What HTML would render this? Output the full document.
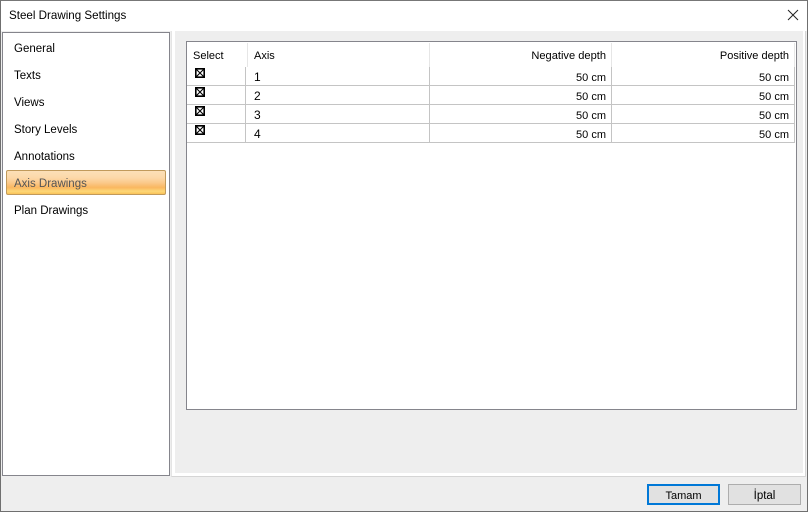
<!DOCTYPE html>
<html><head><meta charset="utf-8">
<style>
html,body{margin:0;padding:0}
body{width:808px;height:512px;overflow:hidden;position:relative;background:#eeeeee;font-family:"Liberation Sans",sans-serif;font-size:11px;color:#000}
div{position:absolute;box-sizing:border-box}
.t{white-space:nowrap;line-height:16px;height:16px}
.l{font-size:11.5px}
.r{text-align:right}
.hl{height:1px;background:#c4c4c4;left:187px;width:608px}
.vl{width:1px;background:#c4c4c4;top:67px;height:76px}
.hs{width:1px;background:#e6e6e6;top:43px;height:24px}
svg{position:absolute}
</style></head><body>
<div style="left:0;top:31px;width:808px;height:481px;background:#eeeeee"></div>
<div style="left:0;top:0;width:808px;height:31px;background:#fff"></div>
<div style="left:171px;top:31px;width:635px;height:446px;background:#fff;border-bottom:1px solid #d5d5d5;border-right:1px solid #d5d5d5;border-left:1px solid #e4e4e4"></div>
<div style="left:175px;top:31px;width:628px;height:442px;background:#eeeeee"></div>
<div style="left:0;top:0;width:808px;height:512px;border:1px solid #6f6f6f;border-top-color:#777"></div>
<div class="t" style="left:9px;top:8px;font-size:11.6px">Steel Drawing Settings</div>
<svg style="left:787px;top:9px" width="12" height="12" viewBox="0 0 12 12"><path d="M1 1L11 11M11 1L1 11" stroke="#222" stroke-width="1" fill="none"/></svg>

<div style="left:2px;top:32px;width:168px;height:444px;background:#fff;border:1px solid #85858c"></div>
<div class="t l" style="left:14px;top:41px">General</div>
<div class="t l" style="left:14px;top:68px">Texts</div>
<div class="t l" style="left:14px;top:95px">Views</div>
<div class="t l" style="left:14px;top:122px">Story Levels</div>
<div class="t l" style="left:14px;top:149px">Annotations</div>
<div style="left:6px;top:170px;width:160px;height:25px;border:1px solid #c19a5b;border-radius:2px;background:linear-gradient(to bottom,#fce0b8 0%,#fcd8a8 30%,#fbc889 52%,#fab760 72%,#fdd777 88%,#fac258 100%)"></div>
<div class="t l" style="left:14px;top:176px;color:#555">Axis Drawings</div>
<div class="t l" style="left:14px;top:203px">Plan Drawings</div>

<div style="left:186px;top:41px;width:611px;height:369px;background:#fff;border:1px solid #85858c"></div>
<div class="hs" style="left:247px"></div>
<div class="hs" style="left:429px"></div>
<div class="hs" style="left:611px"></div>
<div class="hs" style="left:794px"></div>
<div class="hl" style="top:85px"></div>
<div class="hl" style="top:104px"></div>
<div class="hl" style="top:123px"></div>
<div class="hl" style="top:142px"></div>
<div class="vl" style="left:245px"></div>
<div class="vl" style="left:429px"></div>
<div class="vl" style="left:611px"></div>
<div class="vl" style="left:794px"></div>

<div class="t" style="left:193px;top:48px">Select</div>
<div class="t" style="left:254px;top:48px">Axis</div>
<div class="t r" style="left:430px;width:176px;top:48px;font-size:11.1px">Negative depth</div>
<div class="t r" style="left:612px;width:177px;top:48px">Positive depth</div>

<svg style="left:195px;top:68px" width="10" height="10" viewBox="0 0 10 10"><path d="M.8 .8H9.2V9.2H.8Z" stroke="#000" stroke-width="1.6" fill="none"/><path d="M1.5 1.5L8.5 8.5M8.5 1.5L1.5 8.5" stroke="#000" stroke-width="1.1" fill="none"/></svg>
<svg style="left:195px;top:87px" width="10" height="10" viewBox="0 0 10 10"><path d="M.8 .8H9.2V9.2H.8Z" stroke="#000" stroke-width="1.6" fill="none"/><path d="M1.5 1.5L8.5 8.5M8.5 1.5L1.5 8.5" stroke="#000" stroke-width="1.1" fill="none"/></svg>
<svg style="left:195px;top:106px" width="10" height="10" viewBox="0 0 10 10"><path d="M.8 .8H9.2V9.2H.8Z" stroke="#000" stroke-width="1.6" fill="none"/><path d="M1.5 1.5L8.5 8.5M8.5 1.5L1.5 8.5" stroke="#000" stroke-width="1.1" fill="none"/></svg>
<svg style="left:195px;top:125px" width="10" height="10" viewBox="0 0 10 10"><path d="M.8 .8H9.2V9.2H.8Z" stroke="#000" stroke-width="1.6" fill="none"/><path d="M1.5 1.5L8.5 8.5M8.5 1.5L1.5 8.5" stroke="#000" stroke-width="1.1" fill="none"/></svg>

<div class="t" style="left:254px;top:69px;font-size:12px">1</div>
<div class="t" style="left:254px;top:88px;font-size:12px">2</div>
<div class="t" style="left:254px;top:107px;font-size:12px">3</div>
<div class="t" style="left:254px;top:126px;font-size:12px">4</div>

<div class="t r" style="left:430px;width:176px;top:70px">50 cm</div>
<div class="t r" style="left:430px;width:176px;top:89px">50 cm</div>
<div class="t r" style="left:430px;width:176px;top:108px">50 cm</div>
<div class="t r" style="left:430px;width:176px;top:127px">50 cm</div>
<div class="t r" style="left:612px;width:177px;top:70px">50 cm</div>
<div class="t r" style="left:612px;width:177px;top:89px">50 cm</div>
<div class="t r" style="left:612px;width:177px;top:108px">50 cm</div>
<div class="t r" style="left:612px;width:177px;top:127px">50 cm</div>

<div style="left:647px;top:484px;width:73px;height:21px;background:#e1e1e1;border:2px solid #0078d7"></div>
<div class="t" style="left:647px;width:73px;top:488px;text-align:center">Tamam</div>
<div style="left:728px;top:484px;width:73px;height:21px;background:#e1e1e1;border:1px solid #adadad"></div>
<div class="t" style="left:728px;width:73px;top:488px;text-align:center;font-size:11.5px">İptal</div>
</body></html>
